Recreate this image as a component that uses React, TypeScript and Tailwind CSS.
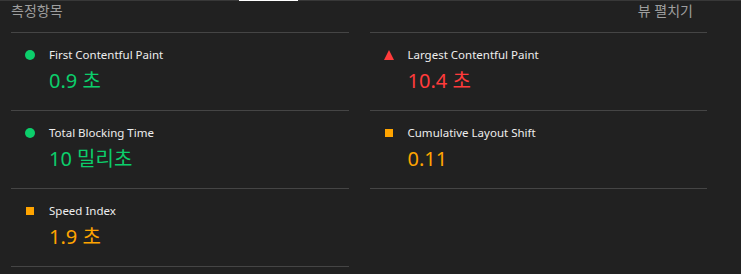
import React from 'react';

type Metric = {
  label: string;
  value: string;
  status: 'pass' | 'average' | 'fail';
};

const METRICS: Metric[] = [
  { label: 'First Contentful Paint', value: '0.9 초', status: 'pass' },
  { label: 'Largest Contentful Paint', value: '10.4 초', status: 'fail' },
  { label: 'Total Blocking Time', value: '10 밀리초', status: 'pass' },
  { label: 'Cumulative Layout Shift', value: '0.11', status: 'average' },
  { label: 'Speed Index', value: '1.9 초', status: 'average' },
];

const valueColor = {
  pass: 'text-[#0cce6b]',
  average: 'text-[#ffa400]',
  fail: 'text-[#ff3b3b]',
};

const StatusIcon: React.FC<{ status: Metric['status'] }> = ({ status }) => {
  if (status === 'pass') return <span className="block w-[10px] h-[10px] rounded-full bg-[#0cce6b]" />;
  if (status === 'average') return <span className="block w-[8px] h-[8px] bg-[#ffa400]" />;
  return (
    <svg width="10" height="10" viewBox="0 0 10 10" className="block">
      <polygon points="5,0 10,10 0,10" fill="#ff3b3b" />
    </svg>
  );
};

const App: React.FC = () => {
  return (
    <div
      className="w-[741px] h-[274px] bg-[#212121] overflow-hidden"
      style={{ fontFamily: '"Noto Sans", "Noto Sans CJK KR", sans-serif' }}
    >
      <div className="h-px bg-[#383838] flex">
        <div className="ml-[239px] w-[59px] bg-white" />
      </div>

      <div className="ml-[11px] w-[696px]">
        <div className="h-[31px] flex justify-between items-start pt-[2px] text-[14px] leading-4 text-[#9e9e9e]">
          <span>측정항목</span>
          <span className="mr-[14px]">뷰 펼치기</span>
        </div>

        <div className="grid grid-cols-2 gap-x-[21px]">
          {METRICS.map((m, idx) => (
            <div
              key={m.label}
              className={`h-[78px] border-b border-[#454545] ${idx < 2 ? 'border-t h-[79px]' : ''} pt-[14px] pl-[14px]`}
            >
              <div className="flex items-center h-4">
                <div className="w-[10px] flex justify-center">
                  <StatusIcon status={m.status} />
                </div>
                <span className="ml-[14px] text-[11.5px] leading-4 text-[#eeeeee]">{m.label}</span>
              </div>
              <div className={`ml-[24px] mt-[5px] text-[20px] leading-[26px] ${valueColor[m.status]}`}>
                {m.value}
              </div>
            </div>
          ))}
        </div>
      </div>
    </div>
  );
};

export default App;
